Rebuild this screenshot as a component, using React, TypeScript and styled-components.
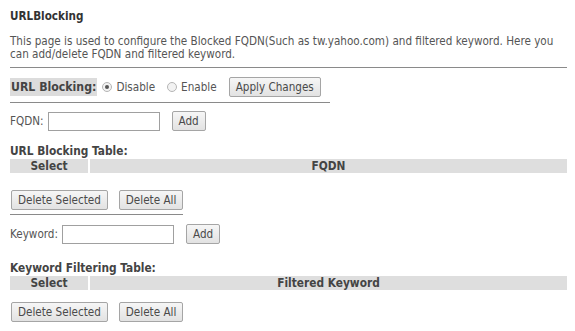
import { FC } from "react";
import styled, { createGlobalStyle } from "styled-components";

const GlobalStyle = createGlobalStyle`
  html, body {
    margin: 0;
    padding: 0;
    background: #fff;
  }
  body {
    font-family: "DejaVu Sans Condensed", "Liberation Sans", sans-serif;
    font-size: 11.6px;
    color: #555;
  }
`;

const Page = styled.div`
  width: 557px;
  padding: 8px 8px 0 10px;
`;

const Title = styled.h1`
  margin: 0;
  font-size: 11.6px;
  font-weight: bold;
  color: #333;
  line-height: 16px;
`;

const Intro = styled.p`
  margin: 11px 0 0;
  line-height: 13px;
  width: 548px;
`;

const Rule = styled.hr<{ $width: number; $top: number }>`
  width: ${(p) => p.$width}px;
  margin: ${(p) => p.$top}px 0 0;
  border: 0;
  border-top: 1px solid #8a8a8a;
  height: 0;
`;

const Row = styled.div<{ $top: number }>`
  display: flex;
  align-items: center;
  margin-top: ${(p) => p.$top}px;
  height: 20px;
`;

const Label = styled.span`
  font-weight: bold;
  font-size: 12.2px;
  color: #444;
  background: #dcdcdc;
  line-height: 18px;
  padding: 0 1px;
  margin-right: 5px;
`;

const Radio = styled.label`
  display: inline-flex;
  align-items: center;
  gap: 4px;
  margin-right: 12px;
`;

const Dot = styled.span<{ $on?: boolean }>`
  width: 10px;
  height: 10px;
  border-radius: 50%;
  border: 1px solid #b5b5b5;
  background: #f2f2f2;
  box-sizing: border-box;
  position: relative;
  &::after {
    content: "";
    display: ${(p) => (p.$on ? "block" : "none")};
    position: absolute;
    left: 2px;
    top: 2px;
    width: 4px;
    height: 4px;
    border-radius: 50%;
    background: #555;
  }
`;

const Button = styled.button<{ $gap?: number }>`
  font-family: inherit;
  font-size: 11.6px;
  color: #4a4a4a;
  height: 20px;
  padding: 0 6px;
  border: 1px solid #a5a5a5;
  border-radius: 2px;
  background: linear-gradient(#f6f6f6, #e2e2e2);
  margin-left: ${(p) => p.$gap ?? 0}px;
`;

const Field = styled.input<{ $w: number }>`
  width: ${(p) => p.$w}px;
  height: 19px;
  box-sizing: border-box;
  border: 1px solid #a0a0a0;
  margin: 0 12px 0 4px;
  padding: 0 3px;
`;

const SubTitle = styled.div<{ $top: number }>`
  font-weight: bold;
  font-size: 11.8px;
  color: #444;
  margin: ${(p) => p.$top}px 0 1px;
  line-height: 14px;
`;

const Table = styled.table`
  width: 557px;
  border-collapse: separate;
  border-spacing: 0;
`;

const Head = styled.th<{ $first?: boolean }>`
  background: #dedede;
  font-size: 11.8px;
  color: #444;
  font-weight: bold;
  line-height: 14px;
  padding: 0;
  text-align: center;
  width: ${(p) => (p.$first ? "78px" : "auto")};
  border-right: ${(p) => (p.$first ? "2px solid #fff" : "0")};
`;

const Actions = styled.div<{ $top: number }>`
  display: flex;
  align-items: center;
  margin-top: ${(p) => p.$top}px;
  margin-left: 1px;
`;

interface BlockProps {
  label: string;
  table: string;
  column: string;
  top: number;
  titleTop: number;
  actionsTop: number;
}

const ListBlock: FC<BlockProps> = ({ label, table, column, top, titleTop, actionsTop }) => (
  <>
    <Row $top={top}>
      <span>{label}:</span>
      <Field $w={112} />
      <Button>Add</Button>
    </Row>
    <SubTitle $top={titleTop}>{table}:</SubTitle>
    <Table>
      <thead>
        <tr>
          <Head $first>Select</Head>
          <Head>{column}</Head>
        </tr>
      </thead>
    </Table>
    <Actions $top={actionsTop}>
      <Button>Delete Selected</Button>
      <Button $gap={11}>Delete All</Button>
    </Actions>
  </>
);

export default function App() {
  return (
    <Page>
      <GlobalStyle />
      <Title>URLBlocking</Title>
      <Intro>
        This page is used to configure the Blocked FQDN(Such as tw.yahoo.com) and filtered keyword. Here you
        can add/delete FQDN and filtered keyword.
      </Intro>
      <Rule $width={557} $top={6} />
      <Row $top={9}>
        <Label>URL Blocking:</Label>
        <Radio>
          <Dot $on />
          Disable
        </Radio>
        <Radio>
          <Dot />
          Enable
        </Radio>
        <Button>Apply Changes</Button>
      </Row>
      <Rule $width={320} $top={5} />
      <ListBlock
        label="FQDN"
        table="URL Blocking Table"
        column="FQDN"
        top={8}
        titleTop={13}
        actionsTop={17}
      />
      <Rule $width={173} $top={4} />
      <ListBlock
        label="Keyword"
        table="Keyword Filtering Table"
        column="Filtered Keyword"
        top={9}
        titleTop={17}
        actionsTop={12}
      />
    </Page>
  );
}
